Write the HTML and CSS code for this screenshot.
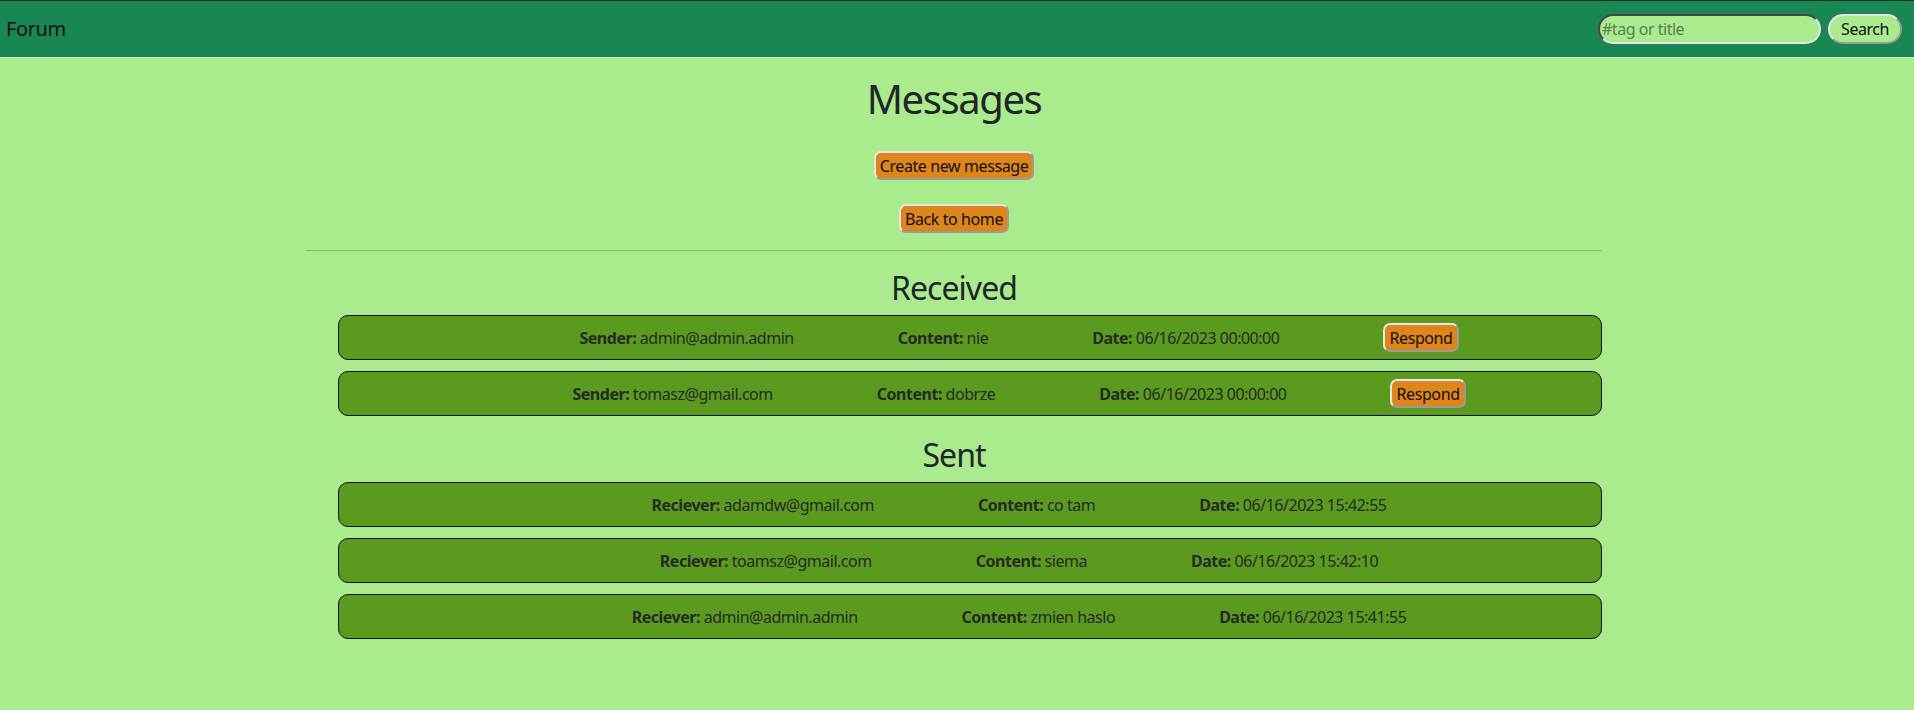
FILE: index.html
```html
<!DOCTYPE html>
<html lang="en">
<head>
<meta charset="utf-8">
<title>Messages</title>
<link rel="stylesheet" href="styles.css">
</head>
<body>
<nav class="navbar">
  <span class="brand">Forum</span>
  <form class="search">
    <input class="search-input" type="text" placeholder="#tag or title">
    <button class="search-btn" type="button">Search</button>
  </form>
</nav>
<main class="page">
  <div class="container">
    <h1 class="title">Messages</h1>
    <div class="actions">
      <button class="btn" type="button">Create new message</button>
      <button class="btn" type="button">Back to home</button>
    </div>
    <hr class="divider">
    <section class="section">
      <h2 class="section-title">Received</h2>
      <ul class="msg-list">
        <li class="msg">
          <span class="field"><b>Sender:</b> admin@admin.admin</span>
          <span class="field"><b>Content:</b> nie</span>
          <span class="field"><b>Date:</b> 06/16/2023 00:00:00</span>
          <button class="btn" type="button">Respond</button>
        </li>
        <li class="msg">
          <span class="field"><b>Sender:</b> tomasz@gmail.com</span>
          <span class="field"><b>Content:</b> dobrze</span>
          <span class="field"><b>Date:</b> 06/16/2023 00:00:00</span>
          <button class="btn" type="button">Respond</button>
        </li>
      </ul>
    </section>
    <section class="section">
      <h2 class="section-title">Sent</h2>
      <ul class="msg-list">
        <li class="msg">
          <span class="field"><b>Reciever:</b> adamdw@gmail.com</span>
          <span class="field"><b>Content:</b> co tam</span>
          <span class="field"><b>Date:</b> 06/16/2023 15:42:55</span>
        </li>
        <li class="msg">
          <span class="field"><b>Reciever:</b> toamsz@gmail.com</span>
          <span class="field"><b>Content:</b> siema</span>
          <span class="field"><b>Date:</b> 06/16/2023 15:42:10</span>
        </li>
        <li class="msg">
          <span class="field"><b>Reciever:</b> admin@admin.admin</span>
          <span class="field"><b>Content:</b> zmien haslo</span>
          <span class="field"><b>Date:</b> 06/16/2023 15:41:55</span>
        </li>
      </ul>
    </section>
  </div>
</main>
</body>
</html>
```
FILE: styles.css
```css
* { box-sizing: border-box; }

html, body {
  margin: 0;
  padding: 0;
}

body {
  background: #aaeb8e;
  color: #212529;
  font-family: "Noto Sans", "Open Sans", sans-serif;
  font-size: 16px;
  line-height: 24px;
  letter-spacing: -0.03em;
}

.navbar {
  display: flex;
  align-items: center;
  justify-content: space-between;
  height: 58px;
  background: #198754;
  border-top: 1px solid #1e2a24;
  border-bottom: 1px solid #cdeec4;
  padding: 0 12px 0 6px;
}

.brand {
  font-size: 20px;
  line-height: 28px;
  color: #111;
  letter-spacing: -0.02em;
}

.search {
  display: flex;
  align-items: center;
  gap: 7px;
  margin: 0;
}

.search-input {
  width: 223px;
  height: 30px;
  background: #aaeb8e;
  border: 2px inset #e4e4e4;
  border-top-color: #9a9a9a;
  border-left-color: #9a9a9a;
  border-radius: 15px;
  padding: 0 2px;
  font-family: inherit;
  font-size: 16px;
  letter-spacing: -0.03em;
  color: #212529;
}

.search-input::placeholder {
  color: #5a7f52;
}

.search-btn {
  height: 30px;
  width: 74px;
  padding: 0;
  background: #aaeb8e;
  border: 2px solid #e4e4e4;
  border-right-color: #9a9a9a;
  border-bottom-color: #9a9a9a;
  border-radius: 15px;
  font-family: inherit;
  font-size: 16px;
  letter-spacing: -0.03em;
  color: #111;
}

.page {
  padding-right: 6px;
}

.container {
  max-width: 1296px;
  margin: 0 auto;
}

.title {
  margin: 17px 0 0;
  font-size: 40px;
  line-height: 48px;
  font-weight: 400;
  text-align: center;
  letter-spacing: -0.035em;
}

.actions {
  display: flex;
  flex-direction: column;
  align-items: center;
  gap: 24px;
  margin-top: 28px;
}

.btn {
  height: 29px;
  padding: 0 4px;
  background: #de861c;
  border: 2px solid #e6e6e6;
  border-right-color: #9b9b9b;
  border-bottom-color: #9b9b9b;
  border-radius: 7px;
  font-family: inherit;
  font-size: 16px;
  line-height: 20px;
  letter-spacing: -0.025em;
  color: #111;
}

.divider {
  margin: 17px 0 18px;
  border: 0;
  border-top: 1px solid #88ba76;
}

.section-title {
  margin: 0 0 8px;
  font-size: 32px;
  line-height: 38px;
  font-weight: 400;
  text-align: center;
  letter-spacing: -0.03em;
}

.msg-list {
  list-style: none;
  margin: 0 0 20px;
  padding: 0 0 0 32px;
  display: flex;
  flex-direction: column;
  gap: 11px;
}

.msg {
  display: flex;
  align-items: center;
  justify-content: center;
  gap: 104px;
  height: 45px;
  padding-left: 98px;
  background: #5a9a1e;
  border: 1px solid #111;
  border-radius: 10px;
  color: #262a26;
}

.field b {
  font-weight: 700;
}
```
